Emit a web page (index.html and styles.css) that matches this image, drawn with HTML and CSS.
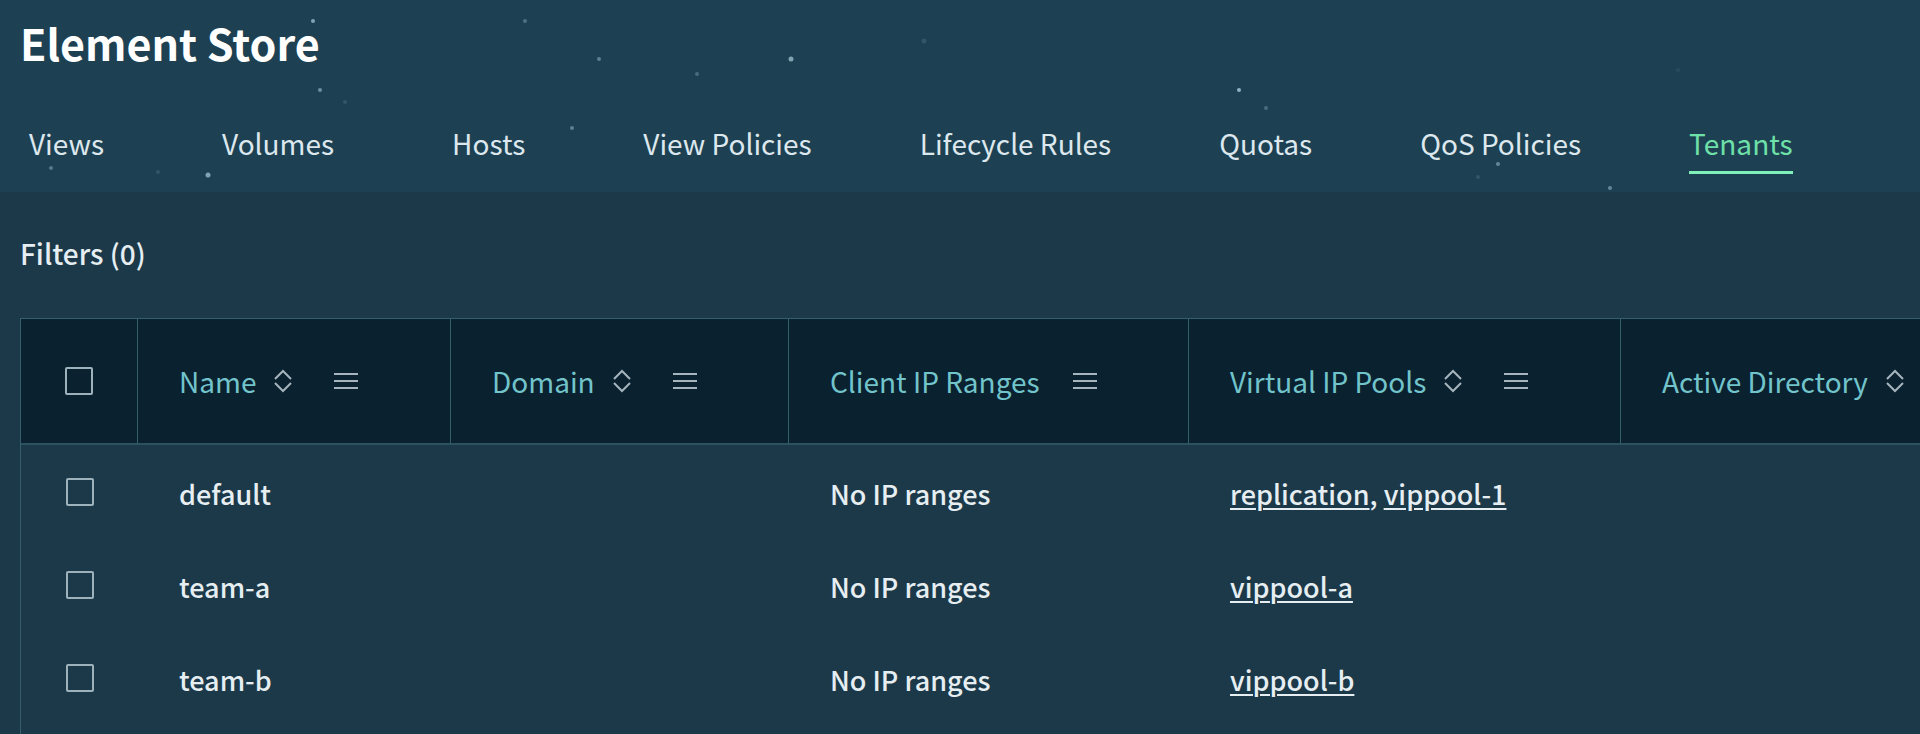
FILE: index.html
```html
<!DOCTYPE html>
<html lang="en">
<head>
  <meta charset="UTF-8" />
  <meta name="viewport" content="width=device-width, initial-scale=1.0"/>
  <title>Element Store</title>
  <link rel="stylesheet" href="styles.css">
</head>
<body>

  <!-- Shared icons -->
  <svg class="sprite" aria-hidden="true">
    <symbol id="sortIcon" viewBox="0 0 18 24">
      <path d="M1 10 L9 2 L17 10 M1 14 L9 22 L17 14" fill="none" stroke="currentColor" stroke-width="2"/>
    </symbol>
    <symbol id="menuIcon" viewBox="0 0 24 18">
      <path d="M0 2 H24 M0 9 H24 M0 16 H24" fill="none" stroke="currentColor" stroke-width="2"/>
    </symbol>
  </svg>

  <header>
    <svg class="stars" aria-hidden="true">
      <g fill="#a9cfdc">
        <circle cx="313" cy="21" r="2" opacity="0.7"/>
        <circle cx="525" cy="21" r="2" opacity="0.35"/>
        <circle cx="599" cy="59" r="2" opacity="0.45"/>
        <circle cx="320" cy="90" r="2" opacity="0.55"/>
        <circle cx="345" cy="102" r="2" opacity="0.15"/>
        <circle cx="572" cy="128" r="2" opacity="0.45"/>
        <circle cx="51" cy="168" r="2" opacity="0.4"/>
        <circle cx="158" cy="172" r="2" opacity="0.15"/>
        <circle cx="208" cy="175" r="2.5" opacity="0.7"/>
        <circle cx="697" cy="74" r="2" opacity="0.3"/>
        <circle cx="791" cy="59" r="2.5" opacity="0.7"/>
        <circle cx="924" cy="41" r="2.5" opacity="0.15"/>
        <circle cx="1239" cy="90" r="2" opacity="0.8"/>
        <circle cx="1266" cy="108" r="2" opacity="0.3"/>
        <circle cx="1498" cy="164" r="2" opacity="0.5"/>
        <circle cx="1478" cy="177" r="2" opacity="0.15"/>
        <circle cx="1610" cy="188" r="2" opacity="0.5"/>
        <circle cx="1678" cy="70" r="2" opacity="0.08"/>
      </g>
    </svg>
    <h1>Element Store</h1>
    <nav class="tabs">
      <a class="wide" href="#views">Views</a>
      <a class="wide" href="#volumes">Volumes</a>
      <a class="wide" href="#hosts">Hosts</a>
      <a href="#view-policies">View Policies</a>
      <a href="#lifecycle-rules">Lifecycle Rules</a>
      <a href="#quotas">Quotas</a>
      <a href="#qos-policies">QoS Policies</a>
      <a class="active" href="#tenants">Tenants</a>
    </nav>
  </header>

  <main>
    <button type="button" class="filters">Filters (0)</button>

    <div class="table-wrap">
      <table class="tenants">
        <colgroup>
          <col class="col-check">
          <col class="col-name">
          <col class="col-domain">
          <col class="col-client">
          <col class="col-pools">
          <col class="col-directory">
        </colgroup>
        <thead>
          <tr>
            <th class="check"><input type="checkbox" aria-label="Select all tenants"></th>
            <th>
              <div class="head">Name
                <button type="button" class="sort" aria-label="Sort by name"><svg><use href="#sortIcon"/></svg></button>
                <button type="button" class="menu" aria-label="Name menu"><svg><use href="#menuIcon"/></svg></button>
              </div>
            </th>
            <th>
              <div class="head">Domain
                <button type="button" class="sort" aria-label="Sort by domain"><svg><use href="#sortIcon"/></svg></button>
                <button type="button" class="menu" aria-label="Domain menu"><svg><use href="#menuIcon"/></svg></button>
              </div>
            </th>
            <th>
              <div class="head">Client IP Ranges
                <button type="button" class="menu" aria-label="Client IP ranges menu"><svg><use href="#menuIcon"/></svg></button>
              </div>
            </th>
            <th>
              <div class="head">Virtual IP Pools
                <button type="button" class="sort" aria-label="Sort by virtual IP pools"><svg><use href="#sortIcon"/></svg></button>
                <button type="button" class="menu" aria-label="Virtual IP pools menu"><svg><use href="#menuIcon"/></svg></button>
              </div>
            </th>
            <th>
              <div class="head">Active Directory
                <button type="button" class="sort" aria-label="Sort by active directory"><svg><use href="#sortIcon"/></svg></button>
              </div>
            </th>
          </tr>
        </thead>
        <tbody>
          <tr>
            <td class="check"><input type="checkbox" aria-label="Select default"></td>
            <td>default</td>
            <td></td>
            <td>No IP ranges</td>
            <td><a href="#replication">replication</a>, <a href="#vippool-1">vippool-1</a></td>
            <td></td>
          </tr>
          <tr>
            <td class="check"><input type="checkbox" aria-label="Select team-a"></td>
            <td>team-a</td>
            <td></td>
            <td>No IP ranges</td>
            <td><a href="#vippool-a">vippool-a</a></td>
            <td></td>
          </tr>
          <tr>
            <td class="check"><input type="checkbox" aria-label="Select team-b"></td>
            <td>team-b</td>
            <td></td>
            <td>No IP ranges</td>
            <td><a href="#vippool-b">vippool-b</a></td>
            <td></td>
          </tr>
        </tbody>
      </table>
    </div>
  </main>

</body>
</html>
```
FILE: styles.css
```css
* { box-sizing: border-box; }
body {
  display: flex;
  flex-direction: column;
  min-height: 100vh;
  margin: 0;
  background: #1b3949;
  color: #e6eef2;
  font-family: "Noto Sans CJK SC", "Noto Sans", sans-serif;
  font-size: 28px;
  line-height: 40px;
}
button {
  background: none;
  border: none;
  padding: 0;
  color: inherit;
  font: inherit;
  cursor: pointer;
}
.sprite {
  display: none;
}
header {
  position: relative;
  padding: 14px 20px 18px;
  background: #1d4153;
}
.stars {
  position: absolute;
  top: 0;
  left: 0;
  width: 100%;
  height: 100%;
}
h1 {
  margin: 0;
  font-size: 43px;
  line-height: 56px;
  font-weight: 700;
  color: #fff;
}
.tabs {
  position: relative;
  display: flex;
  gap: 108px;
  margin-top: 53px;
  padding-left: 9px;
  white-space: nowrap;
}
.tabs a {
  padding-bottom: 8px;
  border-bottom: 3px solid transparent;
  color: #dde8ee;
  text-decoration: none;
}
.tabs .wide {
  margin-right: 10px;
}
.tabs .active {
  color: #6ee0a8;
  border-color: #7ff0b8;
}
main {
  display: flex;
  flex-direction: column;
  align-items: flex-start;
  flex: 1;
  padding: 41px 0 0 20px;
}
.filters {
  margin-bottom: 45px;
  font-weight: 500;
}

/* Tenants table */
.table-wrap {
  flex: 1;
  width: 100%;
  border-top: 1px solid #34606b;
  border-left: 1px solid #34606b;
}
.tenants {
  width: 100%;
  table-layout: fixed;
  border-collapse: separate;
  border-spacing: 0;
  white-space: nowrap;
}
.col-check { width: 117px; }
.col-name { width: 313px; }
.col-domain { width: 338px; }
.col-client { width: 400px; }
.col-pools { width: 432px; }
th, td {
  padding: 0 0 0 41px;
  text-align: left;
}
th {
  height: 126px;
  background: #0a2130;
  color: #72c4cb;
  font-weight: 400;
  border-right: 1px solid #34606b;
  border-bottom: 2px solid #2c525f;
}
th:last-child {
  border-right: none;
}
td {
  height: 93px;
  padding-top: 4px;
  font-size: 27px;
  font-weight: 500;
}
td a {
  color: inherit;
  text-decoration-thickness: 2px;
  text-underline-offset: 3px;
}
th.check, td.check {
  padding: 0;
  text-align: center;
}
input[type="checkbox"] {
  appearance: none;
  display: block;
  width: 28px;
  height: 28px;
  margin: 0 auto;
  border: 2px solid #9db2bb;
  border-radius: 2px;
}
.head {
  display: flex;
  align-items: center;
}
.sort, .menu {
  display: flex;
  color: #a6b5bd;
}
.sort {
  margin-left: 18px;
}
.sort svg {
  width: 18px;
  height: 24px;
}
.menu {
  margin-left: 33px;
}
.sort + .menu {
  margin-left: 42px;
}
.menu svg {
  width: 24px;
  height: 18px;
}
```
